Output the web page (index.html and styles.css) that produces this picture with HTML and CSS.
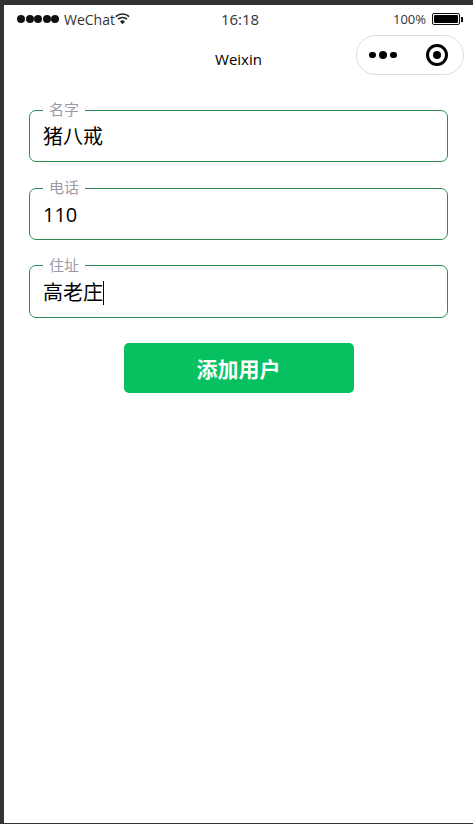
FILE: index.html
```html
<!DOCTYPE html>
<html lang="zh-CN">
<head>
    <meta charset="UTF-8">
    <meta name="viewport" content="width=device-width, initial-scale=1.0">
    <title>Weixin</title>
    <link rel="stylesheet" href="styles.css">
</head>
<body>

<div class="screen">
    <div class="status-bar">
        <div class="status-left">
            <span class="signal">
                <i></i><i></i><i></i><i></i><i></i>
            </span>
            <span>WeChat</span>
            <svg class="wifi" width="15" height="12" viewBox="0 0 15 12">
                <path d="M0.8 3.6 A10 10 0 0 1 14.2 3.6" fill="none" stroke="#222" stroke-width="1.6"/>
                <path d="M3 6.2 A6.6 6.6 0 0 1 12 6.2" fill="none" stroke="#222" stroke-width="1.6"/>
                <path d="M5 8.4 A3.6 3.6 0 0 1 10 8.4 L7.5 11.2 Z" fill="#222"/>
            </svg>
        </div>
        <div class="status-time">16:18</div>
        <div class="status-right">
            <span>100%</span>
            <span class="battery"><i></i></span>
            <span class="battery-tip"></span>
        </div>
    </div>

    <div class="nav-bar">
        <div class="nav-title">Weixin</div>
        <div class="capsule">
            <span class="dots">
                <i></i><i class="big"></i><i></i>
            </span>
            <span class="record"><i></i></span>
        </div>
    </div>

    <form class="user-form">
        <fieldset class="field">
            <legend>名字</legend>
            <div class="field-value">猪八戒</div>
        </fieldset>
        <fieldset class="field">
            <legend>电话</legend>
            <div class="field-value">110</div>
        </fieldset>
        <fieldset class="field">
            <legend>住址</legend>
            <div class="field-value">高老庄<span class="caret"></span></div>
        </fieldset>
        <button class="add-btn" type="button">添加用户</button>
    </form>
</div>

</body>
</html>
```

FILE: styles.css
```css
* {
    box-sizing: border-box;
}

html, body {
    height: 100%;
}

body {
    margin: 0;
    padding: 5px 0 1px 4px;
    background-color: #333;
    color: #000;
    font-family: "Open Sans", "Noto Sans CJK SC", sans-serif;
}

.screen {
    height: 100%;
    background-color: #fff;
}

.status-bar {
    height: 28px;
    padding: 0 10px 0 13px;
    display: grid;
    grid-template-columns: 1fr auto 1fr;
    align-items: center;
    font-size: 14px;
    color: #333;
}

.status-left {
    display: flex;
    align-items: center;
}

.signal {
    display: flex;
    gap: 0.5px;
    margin-right: 5px;
}

.signal i {
    width: 8px;
    height: 8px;
    border-radius: 50%;
    background-color: #111;
}

.status-time {
    font-size: 15px;
}

.status-right {
    display: flex;
    align-items: center;
    justify-content: flex-end;
    font-size: 13px;
}

.battery {
    width: 28px;
    height: 12px;
    margin-left: 6px;
    padding: 1px;
    border: 1px solid #111;
    border-radius: 2px;
    display: flex;
}

.battery i {
    flex: 1;
    background-color: #000;
    border-radius: 1px;
}

.battery-tip {
    width: 2px;
    height: 5px;
    margin-left: 1px;
    background-color: #111;
}

.nav-bar {
    height: 44px;
    padding-right: 9px;
    position: relative;
    display: flex;
    align-items: center;
    justify-content: flex-end;
}

.nav-title {
    position: absolute;
    left: 0;
    right: 0;
    top: 16px;
    text-align: center;
    font-size: 15px;
    line-height: 20px;
}

.capsule {
    width: 108px;
    height: 40px;
    padding: 0 15px 0 12px;
    border: 1px solid #ddd;
    border-radius: 20px;
    display: flex;
    align-items: center;
    justify-content: space-between;
}

.dots {
    display: flex;
    align-items: center;
    gap: 3px;
}

.dots i {
    width: 6.5px;
    height: 6.5px;
    border-radius: 50%;
    background-color: #000;
}

.dots i.big {
    width: 8.5px;
    height: 8.5px;
}

.record {
    width: 22px;
    height: 22px;
    border: 3px solid #000;
    border-radius: 50%;
    display: flex;
    align-items: center;
    justify-content: center;
}

.record i {
    width: 8px;
    height: 8px;
    border-radius: 50%;
    background-color: #000;
}

.user-form {
    padding: 24.4px 25px 0;
    display: flex;
    flex-direction: column;
}

.field {
    margin: 0 0 16.6px;
    padding: 0 13px;
    height: 61.1px;
    border: 1px solid #2e8b57;
    border-radius: 7px;
    min-width: 0;
}

.field legend {
    padding: 0 6px 2px;
    font-size: 15px;
    line-height: 16px;
    color: #9b9ba8;
}

.field-value {
    height: 36px;
    font-size: 20px;
    line-height: 36px;
    display: flex;
    align-items: center;
}

.caret {
    width: 1px;
    height: 24px;
    background-color: #000;
}

.add-btn {
    width: 230px;
    height: 50px;
    margin: 8.5px auto 0;
    border: none;
    border-radius: 5px;
    background-color: #07c160;
    color: #fff;
    font-family: inherit;
    font-size: 21px;
    font-weight: bold;
}
```
